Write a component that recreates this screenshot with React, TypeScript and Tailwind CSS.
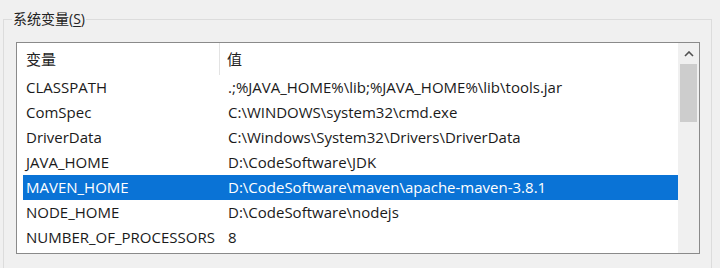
import React from "react";

const rows: [string, string][] = [
  ["CLASSPATH", ".;%JAVA_HOME%\\lib;%JAVA_HOME%\\lib\\tools.jar"],
  ["ComSpec", "C:\\WINDOWS\\system32\\cmd.exe"],
  ["DriverData", "C:\\Windows\\System32\\Drivers\\DriverData"],
  ["JAVA_HOME", "D:\\CodeSoftware\\JDK"],
  ["MAVEN_HOME", "D:\\CodeSoftware\\maven\\apache-maven-3.8.1"],
  ["NODE_HOME", "D:\\CodeSoftware\\nodejs"],
  ["NUMBER_OF_PROCESSORS", "8"],
];

export default function App() {
  const font = { fontFamily: '"Open Sans", "Noto Sans CJK SC", sans-serif' };
  return (
    <div
      className="w-[720px] h-[268px] bg-[#f0f0f0] overflow-hidden pt-[19px] pl-[3px] pr-[8px] text-[#1a1a1a]"
      style={font}
    >
      <div className="relative h-[260px] border border-[#dcdcdc] pt-[22px] pl-[12px] pr-[12px]">
        <div className="absolute left-[8px] top-[-10px] bg-[#f0f0f0] px-[1px] text-[14px] leading-[18px] text-[#222]">
          系统变量(<span className="underline underline-offset-2">S</span>)
        </div>
        <div className="h-[212px] w-[684px] border border-[#8a8a8a] bg-white flex">
          <div className="flex-1 flex flex-col pl-[6px]">
            <div className="h-[32px] flex items-center text-[15px] text-[#222]">
              <div className="w-[197px] pl-[3px] h-full flex items-center border-r border-[#e3e3e3]">变量</div>
              <div className="pl-[7px]">值</div>
            </div>
            {rows.map(([k, v]) => {
              const sel = k === "MAVEN_HOME";
              return (
                <div
                  key={k}
                  className={
                    "h-[25px] flex items-center text-[15px] whitespace-nowrap " +
                    (sel ? "bg-[#0a73d6] text-white" : "text-[#1a1a1a]")
                  }
                >
                  <div className="w-[198px] pl-[3px]">{k}</div>
                  <div className="pl-[7px]">{v}</div>
                </div>
              );
            })}
          </div>
          <div className="w-[21px] bg-[#f0f0f0] flex flex-col items-center">
            <div className="h-[21px] w-full flex items-center justify-center">
              <svg width="10" height="6" viewBox="0 0 10 6">
                <path d="M1 5 L5 1 L9 5" fill="none" stroke="#505050" strokeWidth="1.6" />
              </svg>
            </div>
            <div className="h-[58px] w-[17px] bg-[#cdcdcd]" />
          </div>
        </div>
      </div>
    </div>
  );
}
